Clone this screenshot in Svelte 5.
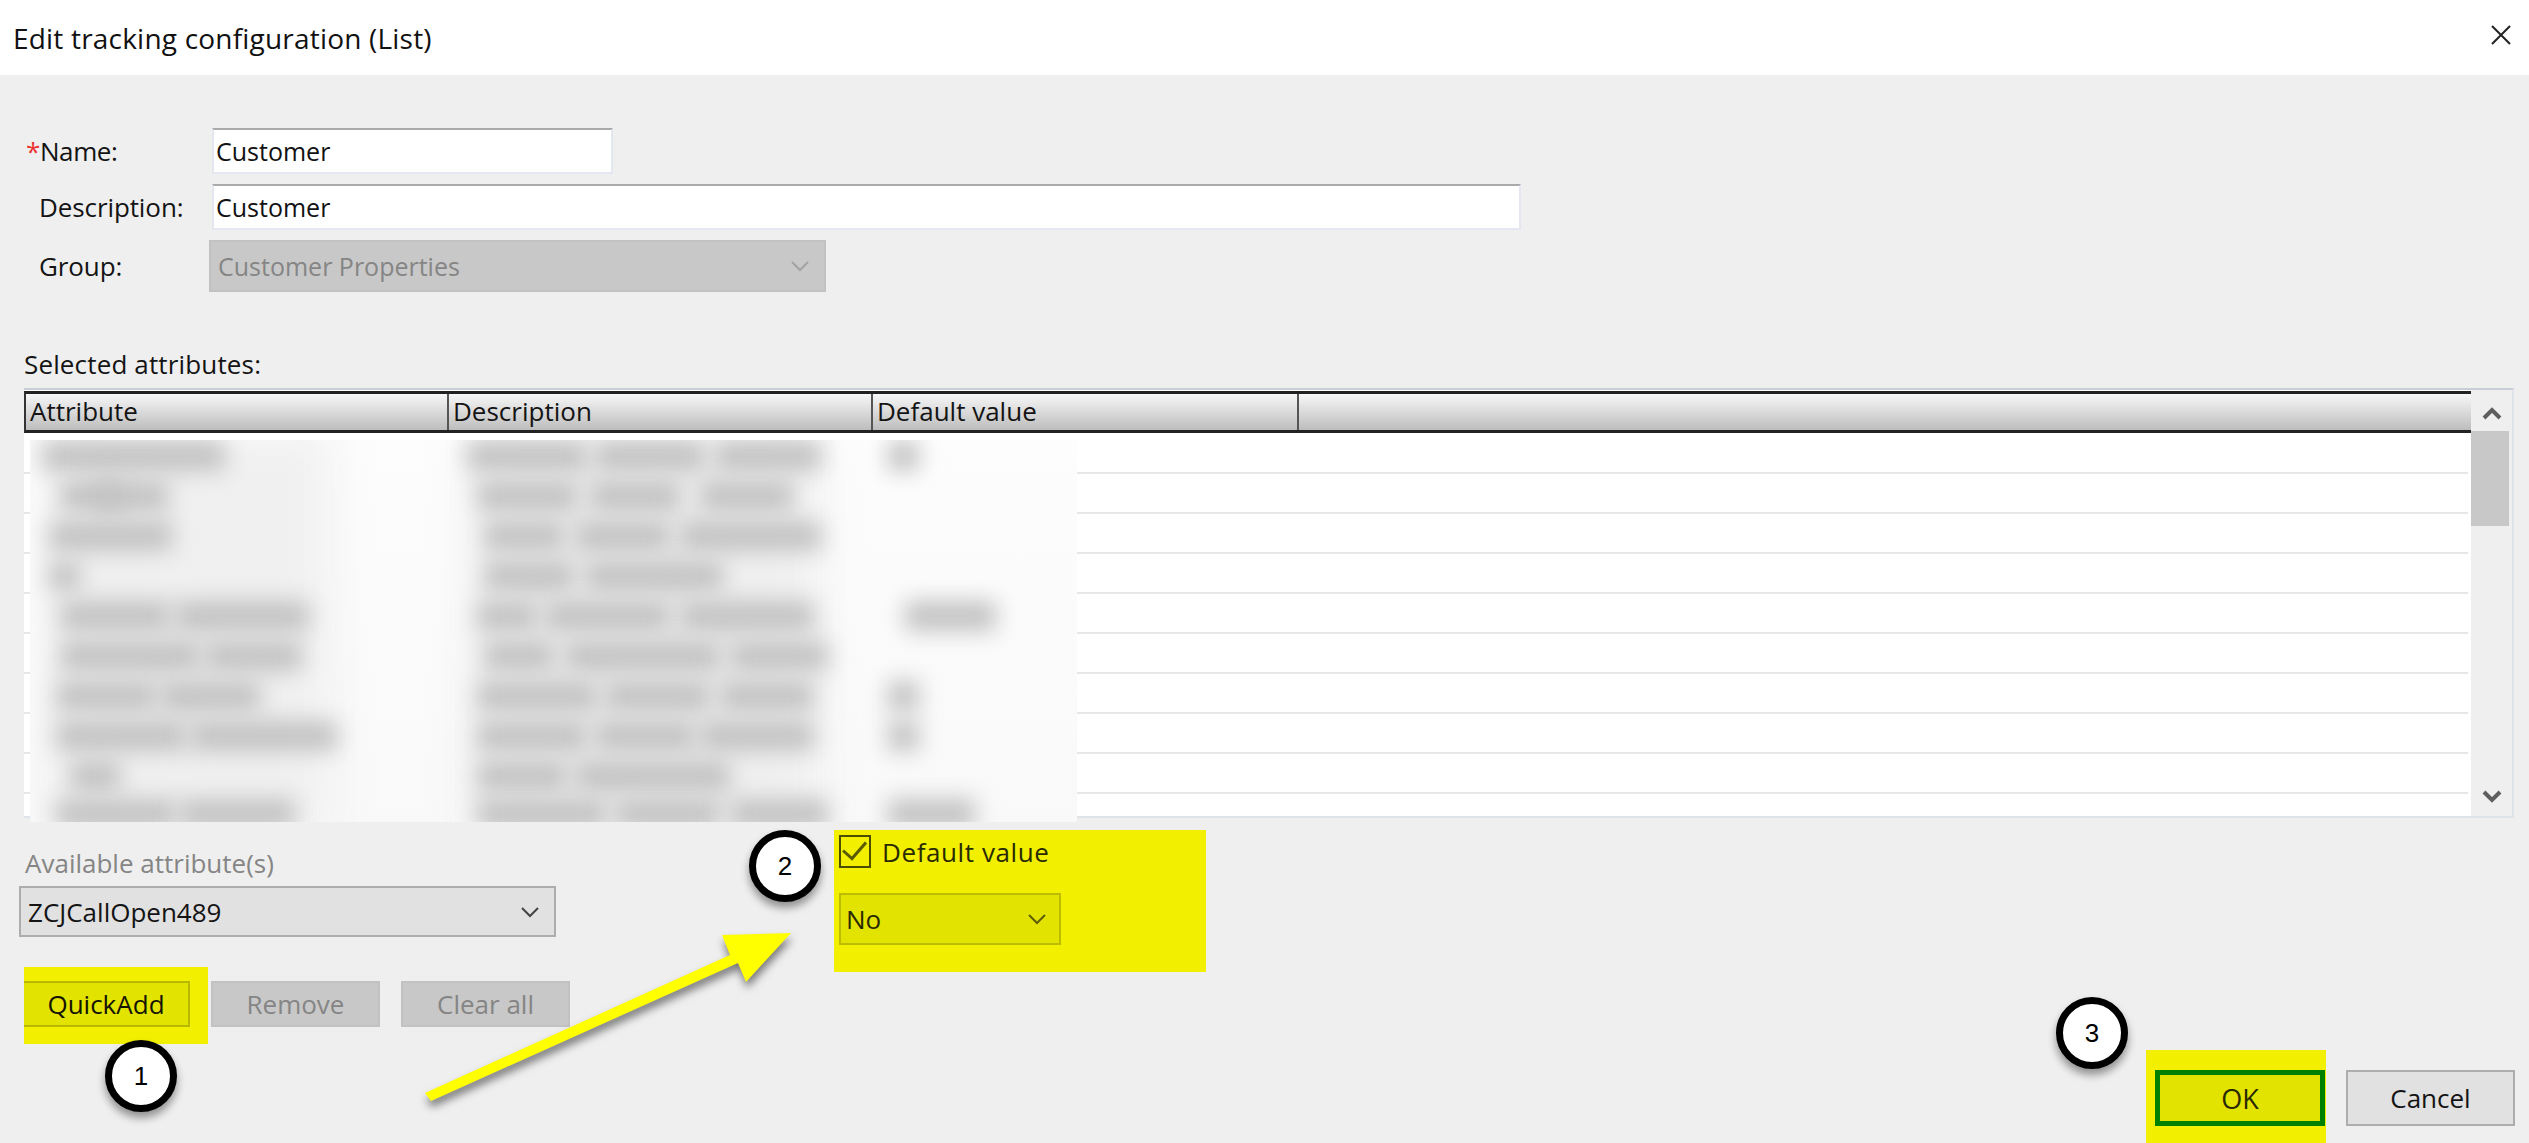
<script>
  const rowTops = [0,1,2,3,4,5,6,7,8,9];
  const lumps = [
    [42,183,0],[467,120,0],[595,110,0],[715,106,0],[888,31,0],
    [60,60,40],[98,70,40],[477,100,40],[590,90,40],[700,93,40],
    [49,123,80],[484,80,80],[575,95,80],[680,141,80],
    [49,31,120],[484,90,120],[585,138,120],
    [60,110,160],[175,134,160],[477,60,160],[545,125,160],[680,134,160],[905,91,160],
    [60,140,200],[205,97,200],[484,70,200],[565,155,200],[730,98,200],
    [56,100,240],[160,100,240],[477,120,240],[605,105,240],[720,94,240],[888,31,240],
    [56,130,280],[190,147,280],[477,110,280],[595,100,280],[700,114,280],[888,31,280],
    [70,50,320],[477,90,320],[575,155,320],
    [56,120,358],[180,115,358],[477,130,358],[615,105,358],[730,98,358],[888,87,358]
  ];
</script>

<div class="dialog">
  <header class="titlebar">
    <span class="title">Edit tracking configuration (List)</span>
    <svg class="close" viewBox="0 0 20 20" aria-hidden="true"><path d="M1 1 L19 19 M19 1 L1 19" /></svg>
  </header>

  <main class="body">
    <div class="form">
      <span class="lbl name-lbl"><span class="req">*</span>Name:</span>
      <div class="input short">Customer</div>
      <span class="lbl">Description:</span>
      <div class="input wide">Customer</div>
      <span class="lbl">Group:</span>
      <div class="select group-select">
        <span>Customer Properties</span>
        <svg class="chev" viewBox="0 0 20 12" aria-hidden="true"><path d="M2 2 L10 10 L18 2" /></svg>
      </div>
    </div>

    <div class="selected-lbl">Selected attributes:</div>

    <section class="table">
      <div class="grid">
        <div class="thead">
          <div class="th c1">Attribute</div>
          <div class="th c2">Description</div>
          <div class="th c3">Default value</div>
          <div class="th c4"></div>
        </div>
        <div class="rows">
          {#each rowTops as r}<div class="row"></div>{/each}
        </div>
      </div>
      <div class="scrollbar">
        <svg class="sb-arrow" viewBox="0 0 20 14" aria-hidden="true"><path d="M2 12 L10 4 L18 12" /></svg>
        <div class="thumb"></div>
        <svg class="sb-arrow down" viewBox="0 0 20 14" aria-hidden="true"><path d="M2 2 L10 10 L18 2" /></svg>
      </div>
    </section>

    <div class="redaction">
      <div class="under u1"></div>
      <div class="under u2"></div>
      {#each lumps as l}
        <div class="lump" style="left:{l[0] - 30}px;width:{l[1]}px;top:{l[2] + 1}px"></div>
      {/each}
    </div>

    <div class="bottom">
      <div class="left">
        <div class="avail-lbl">Available attribute(s)</div>
        <div class="select avail">
          <span>ZCJCallOpen489</span>
          <svg class="chev dark" viewBox="0 0 20 12" aria-hidden="true"><path d="M2 2 L10 10 L18 2" /></svg>
        </div>
        <div class="actions">
          <div class="hl-quick"><div class="btn quick">QuickAdd</div></div>
          <div class="btn off remove">Remove</div>
          <div class="btn off clear">Clear all</div>
        </div>
      </div>

      <div class="hl-default">
        <div class="check-row">
          <span class="checkbox">
            <svg viewBox="0 0 28 28" aria-hidden="true"><path d="M2 13 L11 21 L25 5" /></svg>
          </span>
          <span class="check-text">Default value</span>
        </div>
        <div class="select no">
          <span>No</span>
          <svg class="chev olive" viewBox="0 0 20 12" aria-hidden="true"><path d="M2 2 L10 10 L18 2" /></svg>
        </div>
      </div>

      <div class="footer">
        <div class="hl-ok"><div class="btn ok">OK</div></div>
        <div class="btn cancel">Cancel</div>
      </div>
    </div>
  </main>

  <div class="badge b1">1</div>
  <div class="badge b2">2</div>
  <div class="badge b3">3</div>

  <svg class="arrow" viewBox="0 0 2529 1143" aria-hidden="true">
    <polygon points="425,1093 431,1101 738,963 746,982 791,933 722,935 730,955" />
  </svg>
</div>

<style>
  :global(body) { margin: 0; background: #efefef; }
  .dialog {
    position: relative;
    width: 2529px;
    height: 1143px;
    overflow: hidden;
    background: #efefef;
    color: #141414;
    font-family: "Open Sans", "Noto Sans", sans-serif;
    font-size: 26px;
    letter-spacing: 0;
  }
  .titlebar {
    height: 75px;
    background: #fff;
    display: flex;
    align-items: center;
    justify-content: space-between;
    padding: 0 18px 0 13px;
    box-sizing: border-box;
  }
  .title { font-size: 28px; letter-spacing: 0.2px; color: #111; }
  .close { width: 20px; height: 20px; margin-top: -5px; }
  .close path { stroke: #222; stroke-width: 2; fill: none; }

  .body { display: flex; flex-direction: column; position: relative; }

  .form {
    display: grid;
    grid-template-columns: 209px auto;
    justify-content: start;
    align-items: center;
    padding-top: 53px;
    row-gap: 10px;
  }
  .lbl { padding-left: 39px; letter-spacing: -0.1px; }
  .name-lbl { padding-left: 26px; letter-spacing: -0.4px; }
  .req { color: #e33; }
  .input {
    box-sizing: border-box;
    height: 46px;
    margin-left: 3px;
    background: #fff;
    border: 2px solid #e4e7ef;
    border-top: 2px solid #a9a9a9;
    display: flex;
    align-items: center;
    padding-left: 2px;
    font-size: 25px;
    color: #111;
  }
  .short { width: 401px; }
  .wide { width: 1309px; }
  .select {
    box-sizing: border-box;
    display: flex;
    align-items: center;
    justify-content: space-between;
    border: 2px solid #adadad;
    background: #e1e1e1;
  }
  .group-select {
    width: 617px;
    height: 52px;
    background: #c8c8c8;
    border-color: #c2c2c2;
    color: #858585;
    padding: 0 14px 0 7px;
    font-size: 25px;
  }
  .chev { width: 20px; height: 12px; flex: none; }
  .chev path { fill: none; stroke: #a3a3a3; stroke-width: 2; }
  .chev.dark path { stroke: #444; }
  .chev.olive path { stroke: #5e5e00; }

  .selected-lbl {
    margin: 56px 0 0 24px;
    height: 40px;
    line-height: 32px;
    box-sizing: border-box;
    letter-spacing: 0.15px;
  }

  .table {
    box-sizing: border-box;
    margin-left: 24px;
    width: 2490px;
    height: 430px;
    display: flex;
    background: #fff;
    border-top: 2px solid #c9ced6;
    border-right: 2px solid #dfe3ea;
    border-bottom: 2px solid #dfe3ea;
  }
  .grid { width: 2447px; display: flex; flex-direction: column; min-height: 0; }
  .thead {
    box-sizing: border-box;
    flex: none;
    height: 42px;
    margin-top: 1px;
    display: flex;
    border-top: 3px solid #222;
    border-bottom: 3px solid #222;
    border-left: 2px solid #333;
    background: linear-gradient(#f7f7f7, #bdbdbd);
  }
  .th {
    box-sizing: border-box;
    height: 100%;
    border-right: 2px solid #555;
    padding-left: 4px;
    line-height: 34px;
    white-space: nowrap;
  }
  .c1 { width: 423px; }
  .c2 { width: 424px; }
  .c3 { width: 426px; }
  .c4 { flex: 1; border-right: none; }
  .rows { flex: 1; min-height: 0; overflow: hidden; display: flex; flex-direction: column; }
  .row { box-sizing: border-box; flex: none; height: 40px; border-bottom: 2px solid #e7e7e7; margin-right: 3px; }
  .row:first-child { height: 41px; }

  .scrollbar {
    flex: 1;
    display: flex;
    flex-direction: column;
    align-items: center;
    background: #efefef;
  }
  .sb-arrow { width: 20px; height: 14px; margin-top: 16px; flex: none; }
  .sb-arrow path { fill: none; stroke: #5f5f5f; stroke-width: 4; }
  .sb-arrow.down { margin-top: auto; margin-bottom: 12px; }
  .thumb {
    box-sizing: border-box;
    width: 38px;
    height: 95px;
    margin-top: 11px;
    margin-right: 3px;
    background: #c8c8c8;
  }

  .redaction {
    position: absolute;
    left: 30px;
    top: 365px;
    width: 1047px;
    height: 382px;
    overflow: hidden;
    background: linear-gradient(#fdfdfd, #f9f9f9);
  }
  .under { position: absolute; top: -10px; bottom: -10px; background: #f0f0f0; filter: blur(22px); }
  .u1 { left: 20px; width: 280px; }
  .u2 { left: 440px; width: 350px; }
  .lump {
    position: absolute;
    height: 30px;
    background: #c2c2c2;
    filter: blur(11px);
  }

  .bottom {
    display: flex;
    height: 325px;
    box-sizing: border-box;
  }
  .left { width: 834px; padding-left: 19px; box-sizing: border-box; }
  .avail-lbl {
    color: #858585;
    margin: 28px 0 0 6px;
    height: 40px;
    line-height: 34px;
  }
  .avail { width: 537px; height: 51px; padding: 0 14px 0 7px; }
  .actions { display: flex; gap: 3px; align-items: flex-start; margin: 30px 0 0 5px; }
  .hl-quick { background: #f2f000; padding: 14px 18px 17px 0; }
  .btn {
    box-sizing: border-box;
    height: 46px;
    display: flex;
    align-items: center;
    justify-content: center;
  }
  .quick { width: 166px; background: #e3e300; border: 2px solid #b9b900; border-left: none; color: #141400; }
  .off { background: #c8c8c8; border: 2px solid #c2c2c2; color: #858585; margin-top: 14px; width: 169px; }
  .clear { margin-left: 18px; }

  .hl-default {
    width: 372px;
    height: 142px;
    margin-top: 12px;
    background: #f2f000;
    box-sizing: border-box;
    padding: 5px;
  }
  .check-row { display: flex; align-items: center; gap: 11px; height: 33px; }
  .checkbox {
    box-sizing: border-box;
    width: 32px;
    height: 33px;
    border: 2px solid #4d4d00;
    display: flex;
  }
  .checkbox svg { width: 100%; height: 100%; }
  .checkbox path { fill: none; stroke: #5a5a00; stroke-width: 3; }
  .check-text { letter-spacing: 0.6px; color: #2a2a00; font-size: 26px; }
  .no {
    width: 222px;
    height: 52px;
    margin-top: 25px;
    background: #e3e300;
    border-color: #bcbc00;
    padding: 0 12px 0 5px;
    color: #2a2a00;
  }

  .footer {
    margin-left: auto;
    align-self: flex-end;
    display: flex;
    gap: 20px;
    padding-right: 14px;
  }
  .hl-ok { background: #f2f000; padding: 20px 1px 17px 9px; }
  .ok { width: 170px; height: 56px; background: #e3e300; border: 5px solid #008000; color: #2a2a00; font-size: 27px; }
  .cancel { width: 169px; height: 56px; margin-top: 20px; background: #e1e1e1; border: 2px solid #adadad; }

  .badge {
    position: absolute;
    box-sizing: border-box;
    width: 72px;
    height: 72px;
    border-radius: 50%;
    border: 7px solid #000;
    background: #fff;
    box-shadow: 0 6px 8px rgba(0,0,0,0.4);
    display: flex;
    align-items: center;
    justify-content: center;
    font-family: "Liberation Sans", sans-serif;
    font-size: 26px;
    color: #000;
  }
  .b1 { left: 105px; top: 1040px; }
  .b2 { left: 749px; top: 830px; }
  .b3 { left: 2056px; top: 997px; }

  .arrow {
    position: absolute;
    inset: 0;
    width: 2529px;
    height: 1143px;
    filter: drop-shadow(1px 6px 4px rgba(0,0,0,0.5));
    pointer-events: none;
  }
  .arrow polygon { fill: #ffff00; }
</style>
